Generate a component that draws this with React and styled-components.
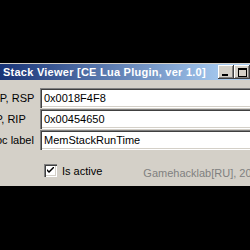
import React from 'react';
import styled, { createGlobalStyle } from 'styled-components';

const GlobalStyle = createGlobalStyle`
  html, body {
    margin: 0;
    background: #000;
    overflow: hidden;
  }
  body {
    font-family: "Liberation Sans", Arial, sans-serif;
    font-size: 11px;
  }
`;

const Screen = styled.div`
  display: flex;
  padding-top: 63px;
  width: 250px;
  height: 250px;
  box-sizing: border-box;
  overflow: hidden;
`;

const Window = styled.div`
  flex-shrink: 0;
  margin-left: -23px;
  width: 293px;
  height: 123px;
  background: #d4d0c8;
  border-top: 1px solid #d4d0c8;
  box-sizing: border-box;
  display: flex;
  flex-direction: column;
`;

const TitleBar = styled.div`
  height: 16px;
  display: flex;
  align-items: center;
  padding: 0 2px 0 26px;
  background: linear-gradient(to right, #0a246a, #a6caf0 85%);
  color: #fff;
  font-weight: bold;
  font-size: 11px;
  letter-spacing: 0.25px;
  white-space: nowrap;
`;

const Title = styled.span`
  flex: 1;
  overflow: hidden;
`;

const CaptionButton = styled.div`
  width: 16px;
  height: 14px;
  flex-shrink: 0;
  box-sizing: border-box;
  background: #d4d0c8;
  box-shadow: inset -1px -1px #404040, inset 1px 1px #fff, inset -2px -2px #808080;
  display: flex;
  align-items: ${p => (p.kind === 'min' ? 'flex-end' : 'center')};
  justify-content: center;
  margin-left: ${p => (p.gap ? '2px' : '0')};
  padding-bottom: ${p => (p.kind === 'min' ? '3px' : '0')};
`;

const MinGlyph = styled.div`
  width: 6px;
  height: 2px;
  background: #000;
  margin-right: 2px;
`;

const MaxGlyph = styled.div`
  width: 9px;
  height: 9px;
  box-sizing: border-box;
  border: 1px solid #000;
  border-top-width: 2px;
`;

const Client = styled.div`
  flex: 1;
  display: flex;
  flex-direction: column;
  padding: 8px 0 0 8px;
`;

const Fields = styled.div`
  display: grid;
  grid-template-columns: 55px 1fr;
  row-gap: 1px;
  align-items: center;
`;

const Label = styled.span`
  color: #000;
  white-space: nowrap;
`;

const Input = styled.div`
  height: 20px;
  box-sizing: border-box;
  background: #fff;
  box-shadow: inset 1px 1px #808080, inset 2px 2px #404040, inset -1px -1px #fff, inset -2px -2px #d4d0c8;
  padding: 0 4px;
  display: flex;
  align-items: center;
  color: #000;
`;

const Footer = styled.div`
  display: flex;
  align-items: flex-end;
  margin-top: 14px;
  padding-left: 59px;
`;

const Check = styled.label`
  display: flex;
  align-items: center;
  gap: 5px;
  color: #000;
`;

const Box = styled.span`
  width: 13px;
  height: 13px;
  box-sizing: border-box;
  background: #fff;
  box-shadow: inset 1px 1px #808080, inset 2px 2px #404040, inset -1px -1px #fff, inset -2px -2px #d4d0c8;
  display: flex;
  align-items: center;
  justify-content: center;
`;

const Credit = styled.span`
  margin-left: 41px;
  color: #808080;
  white-space: nowrap;
  margin-bottom: -2px;
`;

const fields = [
  { label: 'ESP, RSP', value: '0x0018F4F8' },
  { label: 'EIP, RIP', value: '0x00454650' },
  { label: 'Proc label', value: 'MemStackRunTime' },
];

export default function App() {
  return (
    <>
      <GlobalStyle />
      <Screen>
        <Window>
          <TitleBar>
            <Title>Stack Viewer [CE Lua Plugin, ver 1.0]</Title>
            <CaptionButton kind="min"><MinGlyph /></CaptionButton>
            <CaptionButton kind="max"><MaxGlyph /></CaptionButton>
            <CaptionButton kind="close" gap />
          </TitleBar>
          <Client>
            <Fields>
              {fields.map(f => (
                <React.Fragment key={f.label}>
                  <Label>{f.label}</Label>
                  <Input>{f.value}</Input>
                </React.Fragment>
              ))}
            </Fields>
            <Footer>
              <Check>
                <Box>
                  <svg width="7" height="7" viewBox="0 0 7 7">
                    <path d="M0 2 L0 4 L2 6 L7 1 L7 -1 L2 4 Z" fill="#000" />
                  </svg>
                </Box>
                Is active
              </Check>
              <Credit>Gamehacklab[RU], 2015</Credit>
            </Footer>
          </Client>
        </Window>
      </Screen>
    </>
  );
}
